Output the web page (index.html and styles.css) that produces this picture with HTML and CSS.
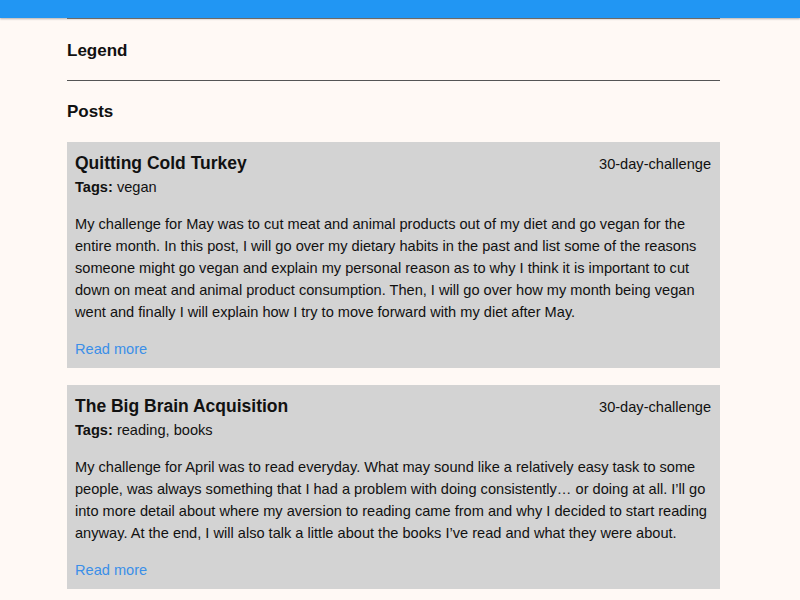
FILE: index.html
```html
<!DOCTYPE html>
<html lang="en">
<head>
<meta charset="utf-8">
<title>Posts</title>
<link rel="stylesheet" href="styles.css">
</head>
<body>
<header class="topbar"></header>
<main class="container">
  <hr class="rule rule-top">
  <h2 class="section-title legend">Legend</h2>
  <hr class="rule">
  <h2 class="section-title posts">Posts</h2>
  <article class="card">
    <div class="card-head">
      <h3 class="card-title">Quitting Cold Turkey</h3>
      <span class="category">30-day-challenge</span>
    </div>
    <div class="tags"><b>Tags:</b> vegan</div>
    <p class="excerpt">My challenge for May was to cut meat and animal products out of my diet and go vegan for the entire month. In this post, I will go over my dietary habits in the past and list some of the reasons someone might go vegan and explain my personal reason as to why I think it is important to cut down on meat and animal product consumption. Then, I will go over how my month being vegan went and finally I will explain how I try to move forward with my diet after May.</p>
    <a class="read-more" href="#">Read more</a>
  </article>
  <article class="card">
    <div class="card-head">
      <h3 class="card-title">The Big Brain Acquisition</h3>
      <span class="category">30-day-challenge</span>
    </div>
    <div class="tags"><b>Tags:</b> reading, books</div>
    <p class="excerpt">My challenge for April was to read everyday. What may sound like a relatively easy task to some people, was always something that I had a problem with doing consistently… or doing at all. I’ll go into more detail about where my aversion to reading came from and why I decided to start reading anyway. At the end, I will also talk a little about the books I’ve read and what they were about.</p>
    <a class="read-more" href="#">Read more</a>
  </article>
</main>
</body>
</html>
```

FILE: styles.css
```css
html, body {
  margin: 0;
  padding: 0;
  background: #fff9f5;
  font-family: "Liberation Sans", Arial, sans-serif;
  color: #111;
}

.topbar {
  position: fixed;
  top: 0;
  left: 0;
  right: 0;
  height: 18px;
  background: #2196f3;
  box-shadow: 0 1px 2px rgba(0, 0, 0, 0.3);
  z-index: 2;
}

.container {
  width: 653px;
  margin: 0 0 0 67px;
  padding-top: 18px;
}

.rule {
  border: 0;
  border-top: 1px solid #555;
  margin: 0;
}

.rule-top {
  border-top-color: #8a8680;
}

.section-title {
  font-size: 17px;
  font-weight: bold;
  line-height: 22px;
  margin: 0;
}

.legend {
  margin-top: 21px;
  margin-bottom: 18px;
}

.posts {
  margin-top: 20px;
  margin-bottom: 19px;
}

.card {
  background: #d3d3d3;
  padding: 8px 9px 8px 8px;
  margin-bottom: 17px;
  font-size: 14.6px;
}

.card-head {
  display: flex;
  justify-content: space-between;
  align-items: center;
  height: 26px;
}

.card-title {
  margin: 0;
  font-size: 17.5px;
  font-weight: bold;
  line-height: 26px;
}

.category {
  font-size: 14.6px;
  line-height: 26px;
  padding-top: 2px;
}

.tags {
  line-height: 22px;
}

.excerpt {
  margin: 15px 0 15px;
  line-height: 22px;
}

.read-more {
  display: block;
  line-height: 22px;
  color: #3b8fe8;
  text-decoration: none;
}
```
